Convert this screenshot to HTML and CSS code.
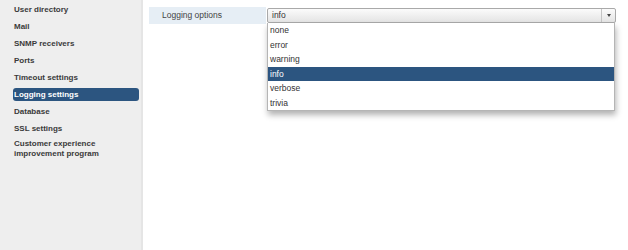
FILE: index.html
```html
<!DOCTYPE html>
<html lang="en">

<head>
    <meta charset="UTF-8" />
    <title>Logging settings</title>
    <link rel="stylesheet" href="styles.css">
</head>

<body>
    <aside class="sidebar">
        <ul class="nav">
            <li>User directory</li>
            <li>Mail</li>
            <li>SNMP receivers</li>
            <li>Ports</li>
            <li>Timeout settings</li>
            <li class="active">Logging settings</li>
            <li>Database</li>
            <li>SSL settings</li>
            <li class="two-line">Customer experience<br />improvement program</li>
        </ul>
    </aside>
    <main class="content">
        <div class="field-row">
            <div class="field-label">Logging options</div>
            <div class="select-wrap">
                <div class="select">
                    <span class="select-value">info</span>
                    <span class="select-arrow"></span>
                </div>
                <ul class="options">
                    <li>none</li>
                    <li>error</li>
                    <li>warning</li>
                    <li class="selected">info</li>
                    <li>verbose</li>
                    <li>trivia</li>
                </ul>
            </div>
        </div>
    </main>
</body>

</html>
```

FILE: styles.css
```css
html,
body {
    margin: 0;
    padding: 0;
    height: 100%;
}

body {
    display: flex;
    background: #fff;
    font-family: "Liberation Sans", Arial, sans-serif;
    color: #333;
}

.sidebar {
    width: 141px;
    flex-shrink: 0;
    background: #eeeeee;
    border-right: 2px solid #e5e5e5;
}

.nav {
    list-style: none;
    margin: 0;
    padding: 1px 2px 0 13px;
}

.nav li {
    height: 17px;
    line-height: 17px;
    padding-left: 1px;
    font-size: 8px;
    font-weight: bold;
    color: #3a3a3a;
}

.nav li.active {
    height: 13px;
    line-height: 13px;
    margin: 2px 0;
    background: #2c5580;
    color: #fff;
    border-radius: 3px;
}

.nav li.two-line {
    height: auto;
    line-height: 10px;
    padding-top: 2px;
}

.content {
    flex: 1;
    padding: 7px 12px 0 6px;
}

.field-row {
    display: flex;
    align-items: flex-start;
}

.field-label {
    width: 104px;
    height: 17px;
    line-height: 16px;
    padding-left: 13px;
    background: #e6eef5;
    font-size: 8.5px;
    color: #444;
}

.select-wrap {
    position: relative;
    flex: 1;
    margin-left: 1px;
    margin-top: 1px;
}

.select {
    display: flex;
    height: 13px;
    border: 1px solid #a9a9a9;
    border-radius: 2px;
    background: linear-gradient(#fbfbfb, #e4e4e4);
}

.select-value {
    flex: 1;
    padding-left: 4px;
    font-size: 8.5px;
    line-height: 13px;
    color: #333;
}

.select-arrow {
    width: 13px;
    border-left: 1px solid #c4c4c4;
    position: relative;
}

.select-arrow::after {
    content: "";
    position: absolute;
    left: 5px;
    top: 5px;
    border-left: 2px solid transparent;
    border-right: 2px solid transparent;
    border-top: 3px solid #444;
}

.options {
    position: absolute;
    top: 15px;
    left: 0;
    right: 1px;
    list-style: none;
    margin: 0;
    padding: 0;
    background: #fff;
    border: 1px solid #b5b5b5;
    border-top: none;
    box-shadow: 1px 4px 6px rgba(0, 0, 0, 0.3);
}

.options li {
    height: 14.5px;
    line-height: 14px;
    padding-left: 2px;
    font-size: 8.5px;
    color: #333;
}

.options li.selected {
    background: #2c5580;
    color: #fff;
}
```
